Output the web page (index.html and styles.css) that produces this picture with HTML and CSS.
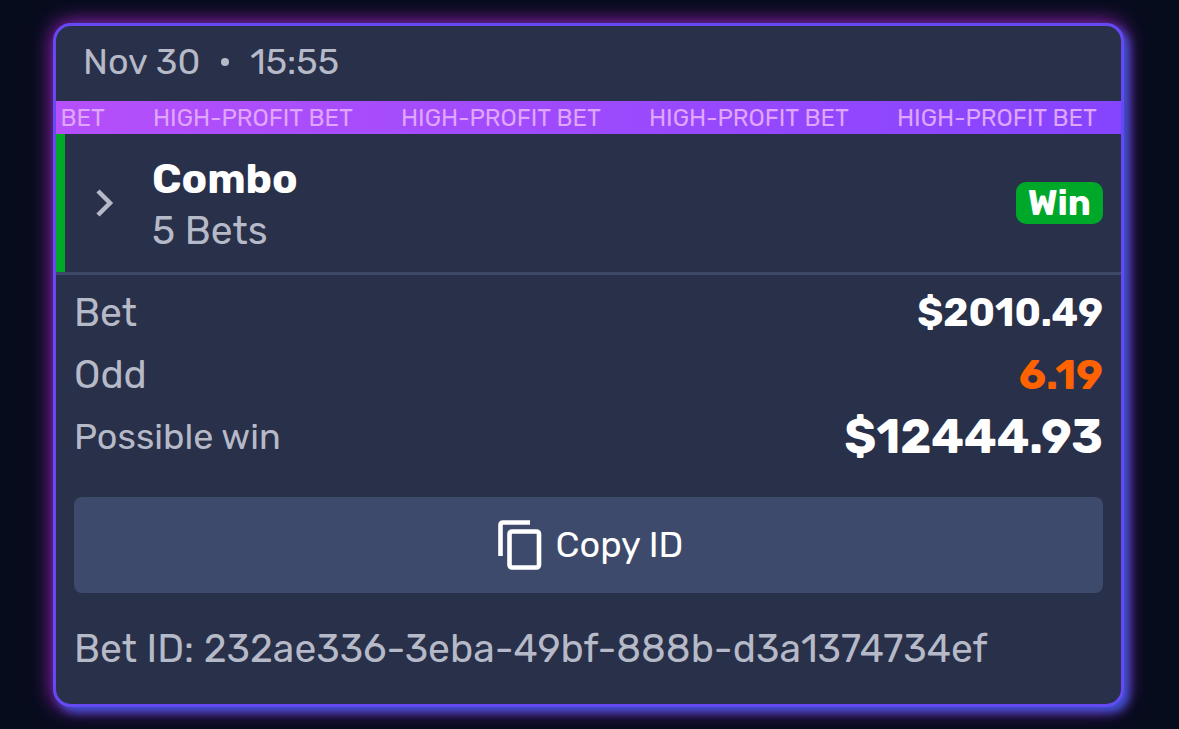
FILE: index.html
```
<!DOCTYPE html>
<html lang="en">

<head>
  <meta charset="utf-8">
  <meta name="viewport" content="width=device-width, initial-scale=1">
  <title>Bet</title>
  <link rel="stylesheet" href="styles.css">
</head>

<body>

  <main class="bet-card">
    <header class="bet-date">
      <span>Nov 30</span>
      <span class="dot"></span>
      <span>15:55</span>
    </header>

    <div class="ticker">
      <span class="ticker-item">HIGH-PROFIT BET</span>
      <span class="ticker-item">HIGH-PROFIT BET</span>
      <span class="ticker-item">HIGH-PROFIT BET</span>
      <span class="ticker-item">HIGH-PROFIT BET</span>
      <span class="ticker-item">HIGH-PROFIT BET</span>
    </div>

    <section class="combo">
      <button class="expand-button" type="button" aria-label="Show bets">
        <svg width="18" height="28" viewBox="0 0 18 28" fill="none" stroke="currentColor" stroke-width="4.500">
          <path d="M2 2L14 14L2 26" />
        </svg>
      </button>
      <div class="combo-text">
        <h1 class="combo-title">Combo</h1>
        <p class="combo-count">5 Bets</p>
      </div>
      <span class="status">Win</span>
    </section>

    <dl class="totals">
      <div class="total-row">
        <dt>Bet</dt>
        <dd>$2010.49</dd>
      </div>
      <div class="total-row">
        <dt>Odd</dt>
        <dd class="odd">6.19</dd>
      </div>
      <div class="total-row">
        <dt class="win-label">Possible win</dt>
        <dd class="win-value">$12444.93</dd>
      </div>
    </dl>

    <footer class="bet-footer">
      <button class="copy-button" type="button">
        <svg width="44" height="50" viewBox="0 0 44 50" fill="none" stroke="currentColor" stroke-width="4.600">
          <path d="M2.500 36V5Q2.500 2.500 5 2.500H32" />
          <rect x="11.500" y="11.500" width="29.500" height="36" rx="2.500" />
        </svg>
        <span>Copy ID</span>
      </button>
      <p class="bet-id">Bet ID: 232ae336-3eba-49bf-888b-d3a1374734ef</p>
    </footer>
  </main>

</body>

</html>
```
FILE: styles.css
```
* {
  box-sizing: border-box;
}

body {
  margin: 0;
  padding: 23px 55px 22px 53px;
  background-color: #070c1d;
  color: #b6bac8;
  font-family: Rubik, Inter, sans-serif;
  font-size: 39px;
  line-height: 48px;
}

h1,
p,
dl,
dd {
  margin: 0;
}

button {
  border: none;
  color: inherit;
  font: inherit;
  cursor: pointer;
}

.bet-card {
  overflow: hidden;
  border: 3px solid #6549f5;
  border-radius: 18px;
  background-color: #293049;
  box-shadow: 5px 5px 10px #3d55d8, 0 0 20px 1px #a420c0;
}

.bet-date {
  display: flex;
  align-items: center;
  gap: 21px;
  height: 75px;
  padding: 0 27px 4px;
  font-size: 36px;
}

.dot {
  width: 8px;
  height: 8px;
  border-radius: 50%;
  background-color: currentColor;
}

.ticker {
  display: flex;
  justify-content: flex-end;
  overflow: hidden;
  padding-top: 1px;
  background: linear-gradient(90deg, #b550fa, #8544ff);
  color: #dfa6fb;
  font-size: 24px;
  line-height: 32px;
}

.ticker-item {
  flex: 0 0 248px;
  text-align: center;
  white-space: nowrap;
}

.combo {
  display: flex;
  align-items: center;
  min-height: 141px;
  padding: 0 18px 0 9px;
  border-bottom: 3px solid #3d4868;
  box-shadow: inset 9px 0 #00a82a;
}

.expand-button {
  display: flex;
  justify-content: center;
  width: 80px;
  padding: 0;
  background: none;
}

.combo-text {
  flex: 1;
  padding: 4px 0 0 7px;
  line-height: 52px;
}

.combo-title {
  color: #fff;
  font-size: 42px;
  font-weight: 700;
  line-height: 52px;
}

.status {
  padding: 0 12px;
  border-radius: 10px;
  background-color: #00a82a;
  color: #fff;
  font-size: 36px;
  font-weight: 700;
  line-height: 42px;
}

.totals {
  padding: 7px 18px 0;
}

.total-row {
  display: flex;
  align-items: center;
  justify-content: space-between;
  height: 62px;
}

.total-row dd {
  color: #fff;
  font-size: 39px;
  font-weight: 700;
}

.total-row .odd {
  color: #ff6200;
  font-size: 42px;
}

.total-row .win-label {
  font-size: 36px;
}

.total-row .win-value {
  font-size: 48px;
}

.bet-footer {
  padding: 29px 18px 31px;
}

.copy-button {
  display: flex;
  align-items: center;
  justify-content: center;
  gap: 14px;
  width: 100%;
  height: 96px;
  padding: 0 4px 0 8px;
  border-radius: 8px;
  background-color: #3e4a6b;
  color: #fff;
  font-size: 36px;
}

.bet-id {
  margin-top: 32px;
}
```
